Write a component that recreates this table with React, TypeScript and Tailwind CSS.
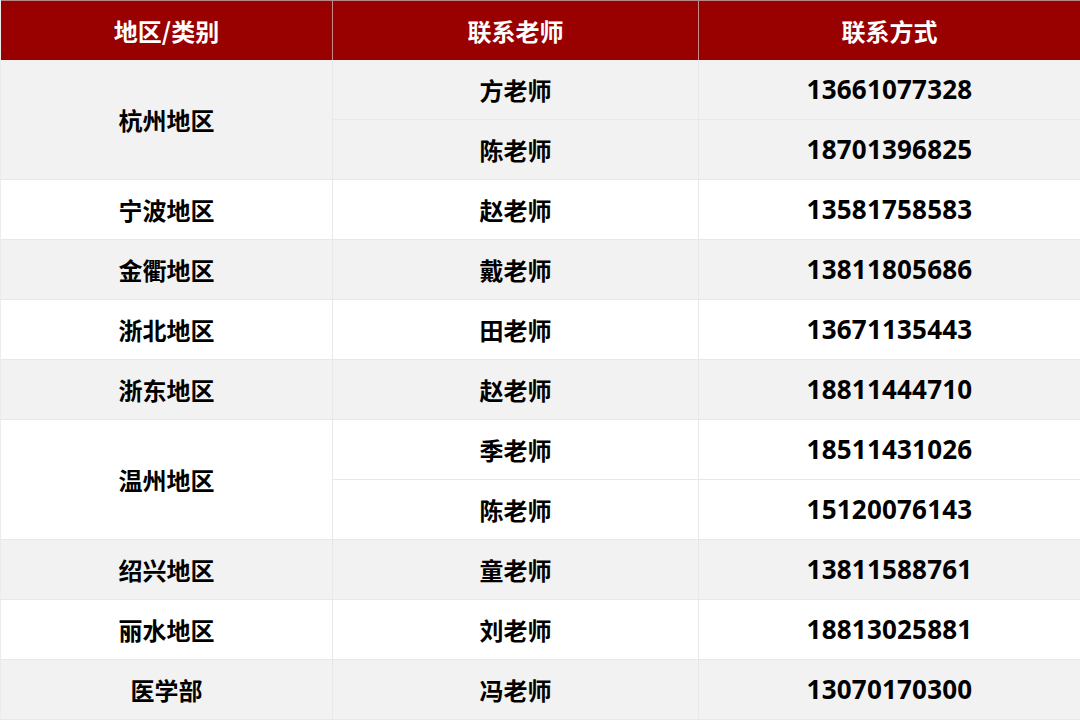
import type { ReactNode } from 'react'

interface Group {
  region: string
  contacts: { teacher: string; phone: string }[]
}

const groups: Group[] = [
  {
    region: '杭州地区',
    contacts: [
      { teacher: '方老师', phone: '13661077328' },
      { teacher: '陈老师', phone: '18701396825' },
    ],
  },
  { region: '宁波地区', contacts: [{ teacher: '赵老师', phone: '13581758583' }] },
  { region: '金衢地区', contacts: [{ teacher: '戴老师', phone: '13811805686' }] },
  { region: '浙北地区', contacts: [{ teacher: '田老师', phone: '13671135443' }] },
  { region: '浙东地区', contacts: [{ teacher: '赵老师', phone: '18811444710' }] },
  {
    region: '温州地区',
    contacts: [
      { teacher: '季老师', phone: '18511431026' },
      { teacher: '陈老师', phone: '15120076143' },
    ],
  },
  { region: '绍兴地区', contacts: [{ teacher: '童老师', phone: '13811588761' }] },
  { region: '丽水地区', contacts: [{ teacher: '刘老师', phone: '18813025881' }] },
  { region: '医学部', contacts: [{ teacher: '冯老师', phone: '13070170300' }] },
]

const cjk = "font-['Noto_Sans_CJK_SC','Noto_Sans',sans-serif]"
const num = "font-['Noto_Sans','Open_Sans',sans-serif]"

function HeadCell({ children, last }: { children: ReactNode; last?: boolean }) {
  return (
    <div
      className={`flex items-center justify-center bg-[#990000] text-[24px] font-bold text-white ${cjk} ${
        last ? '' : 'border-r border-[#c58a8a]'
      }`}
    >
      {children}
    </div>
  )
}

export default function App() {
  return (
    <div className="h-[721px] w-[1080px] overflow-hidden bg-white">
      <div className="grid grid-cols-[332px_366px_1fr] auto-rows-[60px] border-l border-[#ececec]">
        <div className="col-span-3 grid grid-cols-[332px_366px_1fr] border-t border-[#b98585]">
          <HeadCell>地区/类别</HeadCell>
          <HeadCell>联系老师</HeadCell>
          <HeadCell last>联系方式</HeadCell>
        </div>
        {groups.map((g, gi) => {
          const bg = gi % 2 === 0 ? 'bg-[#f2f2f2]' : 'bg-white'
          const span = g.contacts.length === 2 ? 'row-span-2' : ''
          return [
            <div
              key={`r${gi}`}
              className={`${bg} ${span} flex items-center justify-center border-r border-b border-[#e8e8e8] text-[24px] font-bold text-black ${cjk}`}
            >
              {g.region}
            </div>,
            ...g.contacts.flatMap((c, ci) => [
              <div
                key={`t${gi}-${ci}`}
                className={`${bg} flex items-center justify-center border-r border-b border-[#e8e8e8] text-[24px] font-bold text-black ${cjk}`}
              >
                {c.teacher}
              </div>,
              <div
                key={`p${gi}-${ci}`}
                className={`${bg} flex items-center justify-center border-b border-[#e8e8e8] text-[26px] font-bold tracking-[0.2px] text-black ${num}`}
              >
                {c.phone}
              </div>,
            ]),
          ]
        })}
      </div>
    </div>
  )
}
